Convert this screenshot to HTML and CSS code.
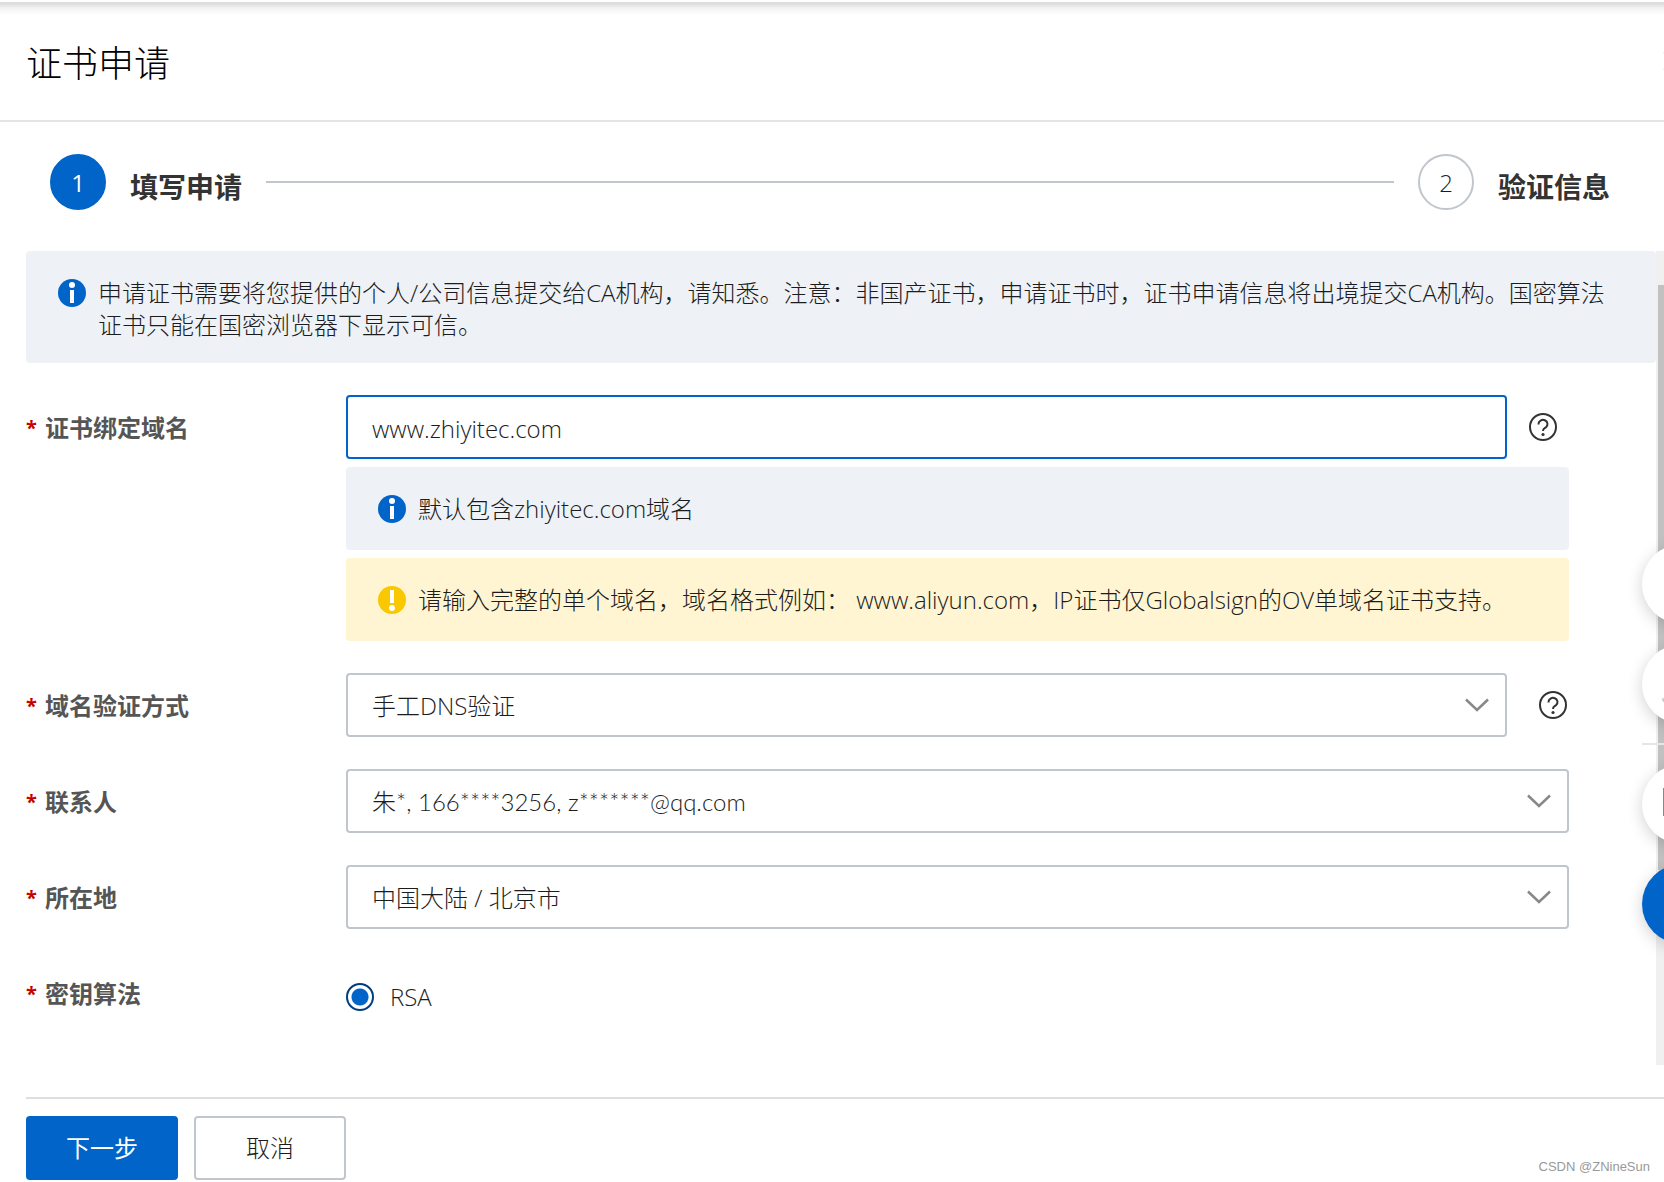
FILE: index.html
```html
<!DOCTYPE html>
<html lang="zh-CN">
<head>
<meta charset="utf-8">
<title>证书申请</title>
<link rel="stylesheet" href="styles.css">
</head>
<body>
<svg class="sprite" aria-hidden="true">
  <symbol id="icon-info" viewBox="0 0 28 28"><circle cx="14" cy="14" r="14" fill="#0064c8"/><circle cx="14" cy="6" r="3" fill="#fff"/><rect x="12" y="11" width="4" height="13" fill="#fff"/></symbol>
  <symbol id="icon-warn" viewBox="0 0 28 28"><circle cx="14" cy="14" r="14" fill="#fac800"/><rect x="12" y="4" width="4" height="13" fill="#fff"/><circle cx="14" cy="22" r="3" fill="#fff"/></symbol>
  <symbol id="icon-help" viewBox="0 0 28 28"><g fill="none" stroke="#333" stroke-width="2"><circle cx="14" cy="14" r="13"/><path d="M9.500 11.500v-.5a4.500 4.200 0 1 1 7.500 3.200c-1.500 1.200-3 1.300-3 3.800"/></g><circle cx="14" cy="21.500" r="1.600" fill="#333"/></symbol>
  <symbol id="icon-down" viewBox="0 0 24 14"><path d="M1 1.500 12 12 23 1.500" fill="none" stroke="#888" stroke-width="2.500"/></symbol>
</svg>

<div class="drawer">
  <div class="topbar"></div>
  <header class="header">
    <h1 class="title">证书申请</h1>
    <button class="close" type="button" aria-label="关闭"><svg viewBox="0 0 20 20" width="20" height="20"><path d="M1 1l18 18M19 1L1 19" stroke="#ccc" stroke-width="2"/></svg></button>
  </header>

  <ol class="steps">
    <li class="step"><span class="step-num step-num-active">1</span><span class="step-name">填写申请</span></li>
    <li class="step-line" aria-hidden="true"></li>
    <li class="step"><span class="step-num">2</span><span class="step-name">验证信息</span></li>
  </ol>

  <div class="scroll">
    <main class="content">
      <div class="notice notice-top">
        <svg class="icon"><use href="#icon-info"/></svg>
        <p class="notice-text">申请证书需要将您提供的个人/公司信息提交给CA机构，请知悉。注意：非国产证书，申请证书时，证书申请信息将出境提交CA机构。国密算法证书只能在国密浏览器下显示可信。</p>
      </div>

      <form class="form" id="apply">
        <div class="row">
          <label class="label" for="domain"><span class="star">*</span>证书绑定域名</label>
          <div class="field">
            <div class="line">
              <input class="control control-focus" id="domain" type="text" value="www.zhiyitec.com">
              <button class="help" type="button" aria-label="帮助"><svg class="icon"><use href="#icon-help"/></svg></button>
            </div>
            <div class="notice">
              <svg class="icon"><use href="#icon-info"/></svg>
              <p class="notice-text">默认包含zhiyitec.com域名</p>
            </div>
            <div class="notice notice-warn">
              <svg class="icon"><use href="#icon-warn"/></svg>
              <p class="notice-text">请输入完整的单个域名，域名格式例如： www.aliyun.com，IP证书仅Globalsign的OV单域名证书支持。</p>
            </div>
          </div>
        </div>

        <div class="row">
          <label class="label" for="verify"><span class="star">*</span>域名验证方式</label>
          <div class="field">
            <div class="line">
              <div class="select">
                <select class="control" id="verify"><option>手工DNS验证</option></select>
                <svg class="chevron"><use href="#icon-down"/></svg>
              </div>
              <button class="help help-far" type="button" aria-label="帮助"><svg class="icon"><use href="#icon-help"/></svg></button>
            </div>
          </div>
        </div>

        <div class="row">
          <label class="label" for="contact"><span class="star">*</span>联系人</label>
          <div class="field">
            <div class="select">
              <select class="control control-masked" id="contact"><option>朱*, 166****3256, z*******@qq.com</option></select>
              <svg class="chevron"><use href="#icon-down"/></svg>
            </div>
          </div>
        </div>

        <div class="row">
          <label class="label" for="place"><span class="star">*</span>所在地</label>
          <div class="field">
            <div class="select">
              <select class="control" id="place"><option>中国大陆 / 北京市</option></select>
              <svg class="chevron"><use href="#icon-down"/></svg>
            </div>
          </div>
        </div>

        <div class="row">
          <span class="label" id="algo"><span class="star">*</span>密钥算法</span>
          <div class="field" role="radiogroup" aria-labelledby="algo">
            <label class="option"><input class="radio" type="radio" name="algo" checked>RSA</label>
          </div>
        </div>
      </form>
    </main>
    <div class="track" aria-hidden="true"><div class="thumb"></div></div>
  </div>

  <footer class="footer">
    <button class="btn btn-primary" type="submit" form="apply">下一步</button>
    <button class="btn" type="button">取消</button>
    <span class="watermark">CSDN @ZNineSun</span>
  </footer>
</div>

<aside class="float">
  <button class="bubble" type="button" aria-label="咨询"></button>
  <button class="bubble" type="button" aria-label="建议"><svg viewBox="0 0 80 80"><path d="M21 54v3h20" fill="none" stroke="#aaa" stroke-width="1"/></svg></button>
  <span class="float-line"></span>
  <button class="bubble" type="button" aria-label="应用"><svg viewBox="0 0 80 80"><rect x="22" y="25" width="36" height="26" fill="none" stroke="#888" stroke-width="2"/></svg></button>
  <button class="bubble bubble-blue" type="button" aria-label="客服"></button>
</aside>
</body>
</html>
```
FILE: styles.css
```css
* { box-sizing: border-box; }

body {
  margin: 0;
  overflow-x: hidden;
  background: #fff;
  color: #1c1c1c;
  font: 300 24px/32px "Open Sans", "Noto Sans CJK SC", sans-serif;
}

button, input, select { font: inherit; color: inherit; }
button { cursor: pointer; }

.sprite { position: absolute; width: 0; height: 0; }
.icon { flex: none; width: 28px; height: 28px; display: block; }

.drawer { display: flex; flex-direction: column; min-height: 100vh; }

.topbar {
  height: 16px;
  background: linear-gradient(#fff 2px, #dcdcdc 2px, #dedede 4px, #f2f2f2 8px, #fff 15px);
}

.header {
  position: relative;
  display: flex;
  align-items: center;
  height: 106px;
  padding: 0 26px 8px;
  border-bottom: 2px solid #e3e4e6;
}
.title { margin: 0; font-size: 36px; line-height: 48px; font-weight: 300; color: #000; }
.close {
  position: absolute;
  top: 35px;
  right: -19px;
  width: 20px;
  height: 20px;
  padding: 0;
  border: 0;
  background: none;
}
.close svg { display: block; }

.steps {
  display: flex;
  align-items: center;
  gap: 24px;
  margin: 0;
  padding: 32px 54px 41px 50px;
  list-style: none;
}
.step { display: flex; align-items: center; gap: 24px; }
.step-num {
  display: flex;
  align-items: center;
  justify-content: center;
  width: 56px;
  height: 56px;
  padding-top: 2px;
  border: 2px solid #c0c6cc;
  border-radius: 50%;
}
.step-num-active { border-color: #0064c8; background: #0064c8; color: #fff; font-weight: 400; }
.step-name { padding-top: 10px; font-size: 28px; line-height: 40px; font-weight: 700; color: #333; }
.step-line { flex: 1; height: 2px; background: #c0c6cc; }

.scroll { flex: 1; display: flex; margin-bottom: 32px; }
.content { flex: 1; padding-left: 26px; }

.notice {
  display: flex;
  gap: 12px;
  min-height: 83px;
  margin-top: 8px;
  padding: 26px 32px 22px;
  border-radius: 4px;
  background: #eef2f7;
}
.notice-top { margin: 0; padding-right: 46px; }
.notice-warn { background: #fff5d2; }
.notice .icon { margin-top: 2px; }
.notice-text { margin: 0; }

.form { display: flex; flex-direction: column; gap: 32px; padding: 32px 87px 0 0; }
.row { display: grid; grid-template-columns: 320px 1fr; align-items: start; }
.label {
  display: flex;
  align-items: center;
  gap: 8px;
  height: 64px;
  padding-top: 2px;
  font-weight: 700;
  color: #555;
}
.star { font-size: 20px; color: #c80000; }
.line { display: flex; align-items: center; }

.control {
  flex: 1;
  width: 100%;
  min-width: 0;
  height: 64px;
  padding: 2px 24px 0;
  border: 2px solid #c0c6cc;
  border-radius: 4px;
  outline: 0;
  background: #fff;
  appearance: none;
}
.control-focus { border-color: #0064c8; }
.control-masked { font-family: Lato, "Noto Sans CJK SC", sans-serif; }
.select { position: relative; flex: 1; display: flex; }
.chevron {
  position: absolute;
  top: 25px;
  right: 18px;
  width: 24px;
  height: 14px;
  pointer-events: none;
}

.help { width: 62px; padding: 0 0 0 22px; border: 0; background: none; }
.help-far { padding-left: 32px; }

.option { display: flex; align-items: center; gap: 16px; height: 72px; }
.radio {
  width: 28px;
  height: 28px;
  margin: 0;
  border: 2px solid #003c80;
  border-radius: 50%;
  appearance: none;
  background: radial-gradient(circle, #0064c8 8px, #fff 9px);
}

.track { display: flex; flex-direction: column; width: 8px; padding: 34px 0 0 2px; background: #f0f0f0; }
.thumb { height: 75%; background: #c1c1c1; }

.footer {
  display: flex;
  align-items: flex-start;
  gap: 16px;
  margin-left: 26px;
  padding: 17px 14px 2px 0;
  border-top: 2px solid #dcdee0;
}
.btn {
  width: 152px;
  height: 64px;
  padding: 0;
  border: 2px solid #c0c6cc;
  border-radius: 4px;
  background: #fff;
}
.btn-primary { border-color: #0064c8; background: #0064c8; color: #fff; font-weight: 400; }
.watermark {
  align-self: flex-end;
  margin-left: auto;
  font: 13px/26px "Liberation Sans", sans-serif;
  color: #999;
}

/* Shortcut bubbles docked on the right edge, mostly outside the window */
.float {
  position: fixed;
  top: 544px;
  right: -58px;
  display: flex;
  flex-direction: column;
  gap: 20px;
  width: 80px;
}
.bubble {
  height: 80px;
  padding: 0;
  border: 0;
  border-radius: 50%;
  background: #fff;
  box-shadow: 0 4px 16px rgba(0, 0, 0, 0.18);
}
.bubble svg { display: block; width: 80px; height: 80px; }
.bubble-blue { background: #0064c8; }
.float-line { height: 2px; margin: -1px 0; background: #e4e6e8; }
```
